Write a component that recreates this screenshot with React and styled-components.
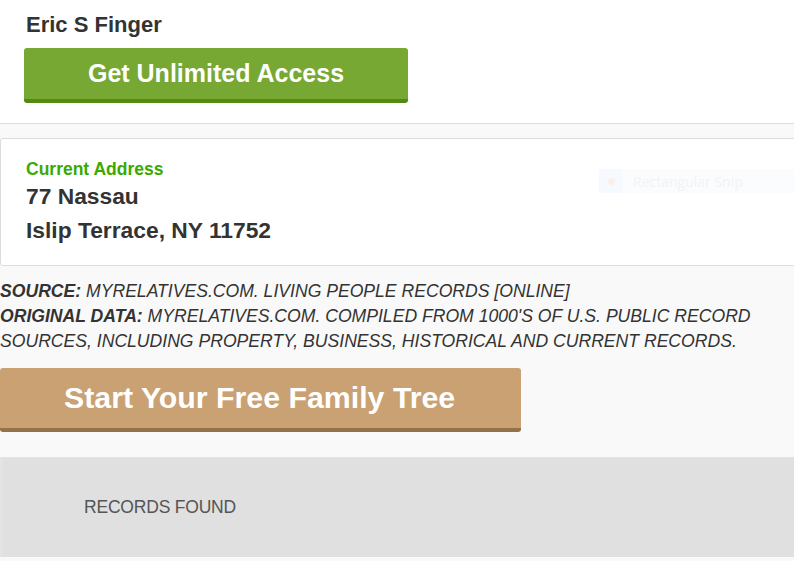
import styled, { createGlobalStyle } from "styled-components";

const GlobalStyle = createGlobalStyle`
  html, body {
    margin: 0;
    padding: 0;
    background: #f9f9f9;
    font-family: "Liberation Sans", Arial, sans-serif;
    color: #333;
  }
`;

const Page = styled.div`
  width: 794px;
  height: 561px;
  overflow: hidden;
  display: flex;
  flex-direction: column;
`;

const Card = styled.section`
  background: #fff;
  border: 1px solid #dcdcdc;
  border-radius: 3px;
  margin: ${(p) => p.$margin || "0"};
  padding: ${(p) => p.$padding};
  position: relative;
`;

const Name = styled.h2`
  margin: 0 0 11px 2px;
  font-size: 22px;
  font-weight: bold;
  line-height: 24px;
  color: #333;
`;

const ActionButton = styled.button`
  display: block;
  width: ${(p) => p.$width}px;
  height: ${(p) => p.$height}px;
  margin: 0;
  padding: 0;
  border: none;
  border-bottom: 4px solid ${(p) => p.$shade};
  border-radius: 3px;
  background: ${(p) => p.$bg};
  color: #fff;
  font-family: inherit;
  font-weight: bold;
  font-size: ${(p) => p.$size}px;
  text-align: ${(p) => p.$align || "center"};
  padding-left: ${(p) => p.$indent || 0}px;
  cursor: pointer;
`;

const Label = styled.div`
  color: #3aaa00;
  font-weight: bold;
  font-size: 17.5px;
  line-height: 20px;
`;

const AddressLine = styled.div`
  font-weight: bold;
  font-size: 22.8px;
  line-height: 34px;
  color: #333;
`;

const Ghost = styled.div`
  position: absolute;
  top: 30px;
  left: 598px;
  width: 196px;
  height: 24px;
  display: flex;
  align-items: center;
  gap: 10px;
  background: #fbfcfe;
  color: #f2f3f6;
  font-family: "Open Sans", sans-serif;
  font-size: 14px;
`;

const GhostDot = styled.span`
  width: 24px;
  height: 24px;
  background: #f6f9fe;
  display: flex;
  align-items: center;
  justify-content: center;
  &::after {
    content: "";
    width: 7px;
    height: 7px;
    border-radius: 50%;
    background: #fbefe9;
  }
`;

const Source = styled.p`
  margin: 13px 0 0;
  font-style: italic;
  text-transform: uppercase;
  font-size: 17.6px;
  line-height: 25px;
  color: #333;
  white-space: nowrap;
  strong {
    font-weight: bold;
  }
`;

const TreeWrap = styled.div`
  margin-top: 14px;
`;

const Records = styled.div`
  margin-top: 25px;
  height: 99px;
  background: #dfe0df;
  border-top: 1px solid #e3e3e3;
  border-left: 3px solid #e3e3e3;
  display: flex;
  align-items: center;
  padding-left: 81px;
  font-size: 17.5px;
  color: #555;
  letter-spacing: -0.2px;
`;

export default function App() {
  return (
    <Page>
      <GlobalStyle />
      <Card $margin="-4px -4px 0 -4px" $padding="16px 0 20px 27px">
        <Name>Eric S Finger</Name>
        <ActionButton
          $width={384}
          $height={55}
          $bg="#76a833"
          $shade="#538b10"
          $size={25}
        >
          Get Unlimited Access
        </ActionButton>
      </Card>
      <Card $margin="14px -4px 0 0" $padding="20px 0 18px 25px">
        <Label>Current Address</Label>
        <AddressLine>77 Nassau</AddressLine>
        <AddressLine>Islip Terrace, NY 11752</AddressLine>
        <Ghost>
          <GhostDot />
          Rectangular Snip
        </Ghost>
      </Card>
      <Source>
        <strong>Source:</strong> MyRelatives.com. Living People Records [online]
        <br />
        <strong>Original Data:</strong> MyRelatives.com. Compiled from 1000's of
        U.S. public record
        <br />
        sources, including property, business, historical and current records.
      </Source>
      <TreeWrap>
        <ActionButton
          $width={521}
          $height={64}
          $bg="#c9a173"
          $shade="#93724a"
          $size={30.3}
          $align="left"
          $indent={64}
        >
          Start Your Free Family Tree
        </ActionButton>
      </TreeWrap>
      <Records>RECORDS FOUND</Records>
    </Page>
  );
}
